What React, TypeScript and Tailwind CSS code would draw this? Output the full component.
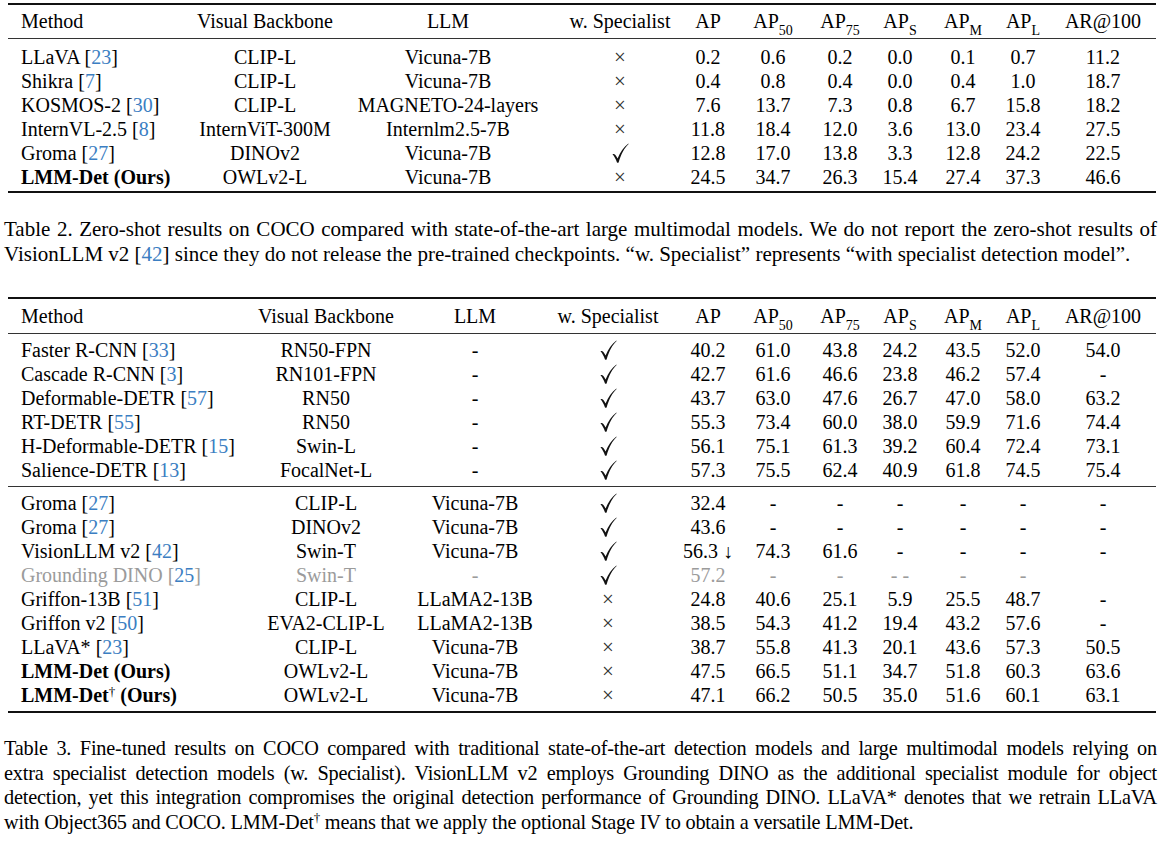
import React from 'react';

const cite = (n: string) => <span className="text-[#3b7ec2]">{n}</span>;

const m = (name: React.ReactNode, ref: string) => (
  <>
    {name} [{cite(ref)}]
  </>
);

// column classes: left columns differ per table, numeric columns are shared
const T1 = ['w-[186px] pl-[13px] text-left', 'w-[142px]', 'w-[224px]', 'w-[120px]'];
const T2 = ['w-[230px] pl-[13px] text-left', 'w-[176px]', 'w-[122px]', 'w-[144px]'];
const NUM = ['w-[56px]', 'w-[74px]', 'w-[60px]', 'w-[60px]', 'w-[66px]', 'w-[54px]', 'w-[106px]'];

type Row = {
  method: React.ReactNode;
  vb: string;
  llm: string;
  spec: boolean;
  vals: string[];
  grey?: boolean;
};

const table1: Row[] = [
  { method: m('LLaVA', '23'), vb: 'CLIP-L', llm: 'Vicuna-7B', spec: false, vals: ['0.2', '0.6', '0.2', '0.0', '0.1', '0.7', '11.2'] },
  { method: m('Shikra', '7'), vb: 'CLIP-L', llm: 'Vicuna-7B', spec: false, vals: ['0.4', '0.8', '0.4', '0.0', '0.4', '1.0', '18.7'] },
  { method: m('KOSMOS-2', '30'), vb: 'CLIP-L', llm: 'MAGNETO-24-layers', spec: false, vals: ['7.6', '13.7', '7.3', '0.8', '6.7', '15.8', '18.2'] },
  { method: m('InternVL-2.5', '8'), vb: 'InternViT-300M', llm: 'Internlm2.5-7B', spec: false, vals: ['11.8', '18.4', '12.0', '3.6', '13.0', '23.4', '27.5'] },
  { method: m('Groma', '27'), vb: 'DINOv2', llm: 'Vicuna-7B', spec: true, vals: ['12.8', '17.0', '13.8', '3.3', '12.8', '24.2', '22.5'] },
  { method: <b>LMM-Det (Ours)</b>, vb: 'OWLv2-L', llm: 'Vicuna-7B', spec: false, vals: ['24.5', '34.7', '26.3', '15.4', '27.4', '37.3', '46.6'] },
];

const table2a: Row[] = [
  { method: m('Faster R-CNN', '33'), vb: 'RN50-FPN', llm: '-', spec: true, vals: ['40.2', '61.0', '43.8', '24.2', '43.5', '52.0', '54.0'] },
  { method: m('Cascade R-CNN', '3'), vb: 'RN101-FPN', llm: '-', spec: true, vals: ['42.7', '61.6', '46.6', '23.8', '46.2', '57.4', '-'] },
  { method: m('Deformable-DETR', '57'), vb: 'RN50', llm: '-', spec: true, vals: ['43.7', '63.0', '47.6', '26.7', '47.0', '58.0', '63.2'] },
  { method: m('RT-DETR', '55'), vb: 'RN50', llm: '-', spec: true, vals: ['55.3', '73.4', '60.0', '38.0', '59.9', '71.6', '74.4'] },
  { method: m('H-Deformable-DETR', '15'), vb: 'Swin-L', llm: '-', spec: true, vals: ['56.1', '75.1', '61.3', '39.2', '60.4', '72.4', '73.1'] },
  { method: m('Salience-DETR', '13'), vb: 'FocalNet-L', llm: '-', spec: true, vals: ['57.3', '75.5', '62.4', '40.9', '61.8', '74.5', '75.4'] },
];

const table2b: Row[] = [
  { method: m('Groma', '27'), vb: 'CLIP-L', llm: 'Vicuna-7B', spec: true, vals: ['32.4', '-', '-', '-', '-', '-', '-'] },
  { method: m('Groma', '27'), vb: 'DINOv2', llm: 'Vicuna-7B', spec: true, vals: ['43.6', '-', '-', '-', '-', '-', '-'] },
  { method: m('VisionLLM v2', '42'), vb: 'Swin-T', llm: 'Vicuna-7B', spec: true, vals: ['56.3 ↓', '74.3', '61.6', '-', '-', '-', '-'] },
  { method: m('Grounding DINO', '25'), vb: 'Swin-T', llm: '-', spec: true, vals: ['57.2', '-', '-', '- -', '-', '-', ''], grey: true },
  { method: m('Griffon-13B', '51'), vb: 'CLIP-L', llm: 'LLaMA2-13B', spec: false, vals: ['24.8', '40.6', '25.1', '5.9', '25.5', '48.7', '-'] },
  { method: m('Griffon v2', '50'), vb: 'EVA2-CLIP-L', llm: 'LLaMA2-13B', spec: false, vals: ['38.5', '54.3', '41.2', '19.4', '43.2', '57.6', '-'] },
  { method: m('LLaVA*', '23'), vb: 'CLIP-L', llm: 'Vicuna-7B', spec: false, vals: ['38.7', '55.8', '41.3', '20.1', '43.6', '57.3', '50.5'] },
  { method: <b>LMM-Det (Ours)</b>, vb: 'OWLv2-L', llm: 'Vicuna-7B', spec: false, vals: ['47.5', '66.5', '51.1', '34.7', '51.8', '60.3', '63.6'] },
  {
    method: (
      <b>
        LMM-Det<sup className="text-[13px] font-normal">†</sup> (Ours)
      </b>
    ),
    vb: 'OWLv2-L',
    llm: 'Vicuna-7B',
    spec: false,
    vals: ['47.1', '66.2', '50.5', '35.0', '51.6', '60.1', '63.1'],
  },
];

// LaTeX-style \checkmark: heavy short left stroke, long thin right stroke
function Check() {
  return (
    <svg width="17" height="20" viewBox="0 0 17 20" className="inline-block align-[-3px]">
      <path
        d="M0.6 11.2 C2.2 10.4 3.6 11.6 5.6 15.4 C8.2 9.4 11.6 4.2 16.4 0.6 C16.6 0.8 16.6 1 16.4 1.2 C12.4 5 9.2 10.6 6.6 19.4 C6.2 19.8 5.4 19.8 5 19.4 C3.6 16 2.2 13 0.6 11.6 Z"
        fill="#111"
      />
    </svg>
  );
}

function Spec({ on }: { on: boolean }) {
  return on ? <Check /> : <span className="text-[21px] text-[#333]">×</span>;
}

const sub = (s: string) => <sub className="text-[14px] align-[-3px]">{s}</sub>;

function Header({ cols }: { cols: string[] }) {
  const heads: React.ReactNode[] = [
    'AP',
    <>AP{sub('50')}</>,
    <>AP{sub('75')}</>,
    <>AP{sub('S')}</>,
    <>AP{sub('M')}</>,
    <>AP{sub('L')}</>,
    'AR@100',
  ];
  return (
    <div className="flex h-[24px] items-center leading-[24px]">
      <div className={`shrink-0 whitespace-nowrap ${cols[0]}`}>Method</div>
      <div className={`shrink-0 whitespace-nowrap text-center ${cols[1]}`}>Visual Backbone</div>
      <div className={`shrink-0 whitespace-nowrap text-center ${cols[2]}`}>LLM</div>
      <div className={`shrink-0 whitespace-nowrap text-center ${cols[3]}`}>w. Specialist</div>
      {heads.map((h, i) => (
        <div key={i} className={`shrink-0 whitespace-nowrap text-center ${NUM[i]}`}>
          {h}
        </div>
      ))}
    </div>
  );
}

function DataRow({ row, cols }: { row: Row; cols: string[] }) {
  const tone = row.grey ? 'text-[#9b9b9b]' : '';
  return (
    <div className="flex h-[24px] items-center leading-[24px]">
      <div className={`shrink-0 whitespace-nowrap ${cols[0]} ${tone}`}>{row.method}</div>
      <div className={`shrink-0 whitespace-nowrap text-center ${cols[1]} ${tone}`}>{row.vb}</div>
      <div className={`shrink-0 whitespace-nowrap text-center ${cols[2]} ${tone}`}>{row.llm}</div>
      <div className={`shrink-0 whitespace-nowrap text-center ${cols[3]}`}>
        <Spec on={row.spec} />
      </div>
      {row.vals.map((v, i) => (
        <div key={i} className={`shrink-0 whitespace-nowrap text-center ${NUM[i]} ${tone}`}>
          {v}
        </div>
      ))}
    </div>
  );
}

export default function App() {
  return (
    <div className="w-[1161px] h-[841px] overflow-hidden bg-white pt-[3px] text-[20px] text-black font-['Liberation_Serif',serif]">
      {/* Table 2 */}
      <div className="ml-[8px] w-[1148px]">
        <div className="border-t-2 border-[#111] pt-[4px] pb-[5px] border-b border-b-[#333]">
          <Header cols={T1} />
        </div>
        <div className="pt-[6px] pb-[2px] border-b-2 border-[#111]">
          {table1.map((r, i) => (
            <DataRow key={i} row={r} cols={T1} />
          ))}
        </div>
      </div>

      <div className="mt-[24px] px-[4px] text-[21px] leading-[25px] text-justify">
        <p className="[text-align-last:justify]">
          Table 2. Zero-shot results on COCO compared with state-of-the-art large multimodal models. We do not report the zero-shot results of
        </p>
        <p>
          VisionLLM v2 [{cite('42')}] since they do not release the pre-trained checkpoints. “w. Specialist” represents “with specialist detection model”.
        </p>
      </div>

      {/* Table 3 */}
      <div className="mt-[30px] ml-[8px] w-[1148px]">
        <div className="border-t-2 border-[#111] pt-[5px] pb-[5px] border-b border-b-[#333]">
          <Header cols={T2} />
        </div>
        <div className="pt-[4px] pb-[4px] border-b border-[#333]">
          {table2a.map((r, i) => (
            <DataRow key={i} row={r} cols={T2} />
          ))}
        </div>
        <div className="pt-[4px] pb-[4px] border-b-2 border-[#111]">
          {table2b.map((r, i) => (
            <DataRow key={i} row={r} cols={T2} />
          ))}
        </div>
      </div>

      <div className="mt-[23px] px-[4px] text-[20.3px] tracking-[-0.2px] leading-[24.5px] text-justify">
        <p className="[text-align-last:justify]">
          Table 3. Fine-tuned results on COCO compared with traditional state-of-the-art detection models and large multimodal models relying on
        </p>
        <p className="[text-align-last:justify]">
          extra specialist detection models (w. Specialist). VisionLLM v2 employs Grounding DINO as the additional specialist module for object
        </p>
        <p className="[text-align-last:justify]">
          detection, yet this integration compromises the original detection performance of Grounding DINO. LLaVA* denotes that we retrain LLaVA
        </p>
        <p>
          with Object365 and COCO. LMM-Det<sup className="text-[13px]">†</sup> means that we apply the optional Stage IV to obtain a versatile LMM-Det.
        </p>
      </div>
    </div>
  );
}
